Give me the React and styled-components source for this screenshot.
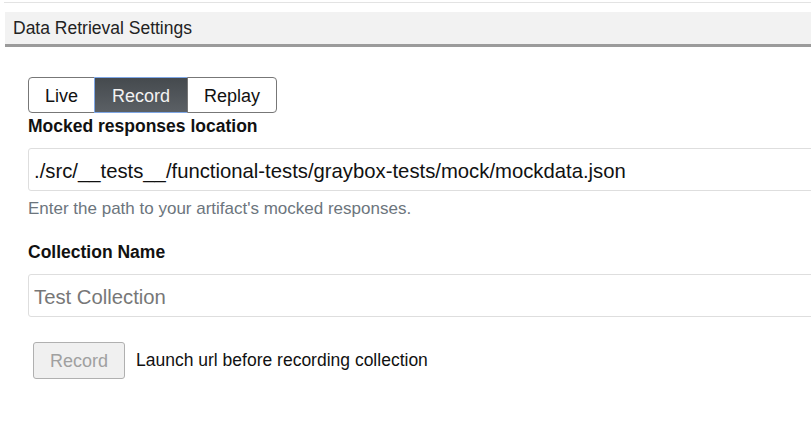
import React from 'react';
import styled, { createGlobalStyle } from 'styled-components';

const GlobalStyle = createGlobalStyle`
    html, body {
        margin: 0;
        padding: 0;
        background: #fff;
        overflow: hidden;
        font-family: 'Liberation Sans', Arial, sans-serif;
        color: #212529;
    }
`

const Page = styled.div`
    width: 900px;
    padding-top: 2px;
`

const TopRule = styled.div`
    height: 1px;
    background: #e3e3e3;
    margin-left: 4px;
`

const SectionHeader = styled.div`
    margin: 9px 0 0 5px;
    height: 32px;
    background: #f2f2f2;
    border-bottom: 3px solid #9b9b9b;
    display: flex;
    align-items: center;
    padding-left: 8px;
    font-size: 17.5px;
    color: #222;
`

const Body = styled.div`
    padding: 30px 0 0 28px;
    display: flex;
    flex-direction: column;
`

const ModeGroup = styled.div`
    display: flex;
    align-self: flex-start;
`

const ModeButton = styled.button`
    font-family: inherit;
    font-size: 18px;
    height: 36px;
    width: ${p => p.$w}px;
    padding: 2px 0 0;
    border: 1px solid ${p => (p.$active ? '#7fa7e6' : '#777')};
    background: ${p => (p.$active ? 'linear-gradient(#454a4e, #5b6065)' : '#fff')};
    color: ${p => (p.$active ? '#f2f2f2' : '#111')};
    border-radius: 0;
    margin-left: -1px;

    &:first-child {
        margin-left: 0;
        border-radius: 4px 0 0 4px;
    }
    &:last-child {
        border-radius: 0 4px 4px 0;
    }
    &:focus { outline: none; }
`

const FieldLabel = styled.label`
    font-weight: 700;
    font-size: 17.5px;
    line-height: 20px;
    color: #111;
    margin-top: ${p => p.$top}px;
`

const TextInput = styled.input`
    box-sizing: border-box;
    margin-top: ${p => p.$top}px;
    height: 43px;
    width: 900px;
    border: 1px solid #dedede;
    border-radius: 3px;
    padding: 3px 5px 0;
    font-family: inherit;
    font-size: 20.3px;
    color: #111;
    &::placeholder { color: #777; }
    &:focus { outline: none; }
`

const HelpText = styled.div`
    margin-top: 8px;
    font-size: 17px;
    line-height: 20px;
    color: #6c757d;
`

const ActionRow = styled.div`
    display: flex;
    align-items: center;
    margin-top: 25px;
    padding-left: 5px;
    gap: 11px;
`

const DisabledButton = styled.button`
    font-family: inherit;
    font-size: 18px;
    width: 92px;
    height: 37px;
    padding: 2px 0 0;
    background: #f0f0f0;
    border: 1px solid #b0b0b0;
    border-radius: 3px;
    color: #a0a0a0;
`

const Caption = styled.span`
    font-size: 17.5px;
    color: #111;
`

export default function App() {
    return (
        <Page>
            <GlobalStyle />
            <TopRule />
            <SectionHeader>Data Retrieval Settings</SectionHeader>
            <Body>
                <ModeGroup>
                    <ModeButton $w={67}>Live</ModeButton>
                    <ModeButton $w={94} $active>Record</ModeButton>
                    <ModeButton $w={90}>Replay</ModeButton>
                </ModeGroup>
                <FieldLabel $top={3}>Mocked responses location</FieldLabel>
                <TextInput $top={12} defaultValue="./src/__tests__/functional-tests/graybox-tests/mock/mockdata.json" />
                <HelpText>Enter the path to your artifact's mocked responses.</HelpText>
                <FieldLabel $top={23}>Collection Name</FieldLabel>
                <TextInput $top={12} placeholder="Test Collection" />
                <ActionRow>
                    <DisabledButton disabled>Record</DisabledButton>
                    <Caption>Launch url before recording collection</Caption>
                </ActionRow>
            </Body>
        </Page>
    );
}
